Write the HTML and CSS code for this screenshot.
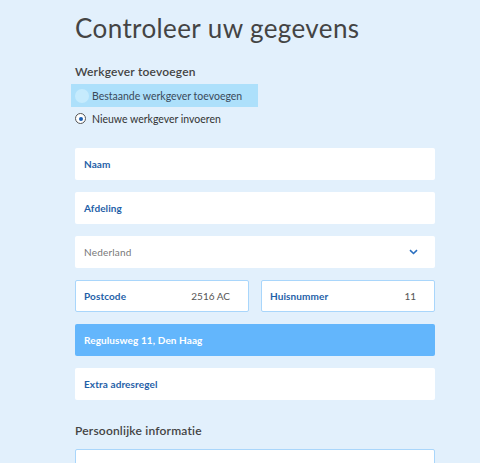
FILE: index.html
```html
<!DOCTYPE html>
<html>
<head>
    <link rel="stylesheet" href="styles.css">
</head>
<body>
    <div class="form">
        <h1 class="title">Controleer uw gegevens</h1>

        <div class="section-label">Werkgever toevoegen</div>
        <div class="radios">
            <label class="radio radio-hover">
                <span class="dot"></span>
                <span>Bestaande werkgever toevoegen</span>
            </label>
            <label class="radio">
                <span class="dot checked"></span>
                <span>Nieuwe werkgever invoeren</span>
            </label>
        </div>

        <div class="fields">
            <div class="field"><span class="field-label">Naam</span></div>
            <div class="field"><span class="field-label">Afdeling</span></div>
            <div class="field select">
                <span class="placeholder">Nederland</span>
                <svg class="chevron" width="9" height="6" viewBox="0 0 9 6">
                    <path d="M1 1.2 L4.5 4.5 L8 1.2" fill="none" stroke="#2a6fc0" stroke-width="1.6"/>
                </svg>
            </div>
            <div class="row">
                <div class="field outlined">
                    <span class="field-label">Postcode</span>
                    <span class="value">2516 AC</span>
                </div>
                <div class="field outlined">
                    <span class="field-label">Huisnummer</span>
                    <span class="value">11</span>
                </div>
            </div>
            <div class="field address"><span class="field-label">Regulusweg 11, Den Haag</span></div>
            <div class="field"><span class="field-label">Extra adresregel</span></div>
        </div>

        <div class="section-label second">Persoonlijke informatie</div>
        <div class="field outlined last"></div>
    </div>
</body>
</html>
```

FILE: styles.css
```css
body {
    margin: 0;
    background-color: #e2f0fc;
    font-family: 'Lato', 'Open Sans', sans-serif;
    color: #444;
    height: 463px;
    overflow: hidden;
}
.form {
    width: 360px;
    margin-left: 75px;
}
.title {
    margin: 0;
    padding-top: 12px;
    font-size: 26px;
    font-weight: 400;
    line-height: 32px;
    color: #444;
    letter-spacing: 0.4px;
}
.section-label {
    margin-top: 20px;
    font-size: 12px;
    font-weight: 600;
    color: #444;
    letter-spacing: 0.2px;
    line-height: 16px;
}
.section-label.second {
    margin-top: 23px;
    margin-bottom: 10px;
}
.radios {
    display: flex;
    flex-direction: column;
    margin-top: 4px;
}
.radio {
    display: flex;
    align-items: center;
    gap: 6px;
    font-size: 10.5px;
    color: #333;
    height: 23px;
    white-space: nowrap;
}
.radio-hover {
    background-color: #ade0fb;
    margin-left: -4px;
    padding-left: 4px;
    width: 183px;
    color: #3a4a5a;
}
.dot {
    flex: none;
    width: 11px;
    height: 11px;
    border-radius: 50%;
    border: 1px solid #555;
    background: #fff;
    box-sizing: border-box;
    position: relative;
}
.radio-hover .dot {
    border-color: transparent;
    background: #c6ebfd;
    width: 14px;
    height: 14px;
    margin-right: -3px;
}
.dot.checked::after {
    content: '';
    position: absolute;
    left: 2.5px;
    top: 2.5px;
    width: 4px;
    height: 4px;
    border-radius: 50%;
    background: #1a5fb4;
}
.fields {
    display: flex;
    flex-direction: column;
    gap: 12px;
    margin-top: 18px;
}
.row {
    display: flex;
    gap: 12px;
}
.row .field {
    flex: 1;
}
.field {
    height: 32px;
    background: #fff;
    border-radius: 2px;
    display: flex;
    align-items: center;
    justify-content: space-between;
    padding: 0 9px;
    box-sizing: border-box;
}
.field.outlined {
    border: 1px solid #a9d6fb;
    padding: 0 8px;
}
.field-label {
    font-size: 10px;
    font-weight: 700;
    color: #1f5fa8;
    letter-spacing: 0.1px;
}
.address {
    background: #63b6fc;
}
.address .field-label {
    color: #fff;
}
.placeholder {
    font-size: 10px;
    color: #777;
    letter-spacing: 0.2px;
}
.chevron {
    margin-right: 8px;
}
.value {
    font-size: 10px;
    color: #555;
    margin-right: 10px;
}
```
